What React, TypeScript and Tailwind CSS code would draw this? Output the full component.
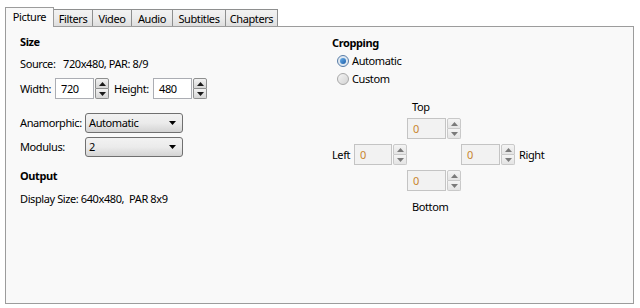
import { ReactNode } from "react";

const tabs = ["Picture", "Filters", "Video", "Audio", "Subtitles", "Chapters"];

const Spinner = ({ disabled }: { disabled?: boolean }) => {
  const btn = disabled
    ? "border-[#c9c9c9] bg-gradient-to-b from-[#f4f4f4] to-[#e4e4e4]"
    : "border-[#8e8f8f] bg-gradient-to-b from-[#f2f2f2] to-[#d6d6d6]";
  const tri = disabled ? "#7a7a7a" : "#1a1a1a";
  return (
    <div className="flex flex-col w-[14px] h-[21px] ml-px">
      <div className={`h-[11px] border rounded-t-[2px] flex items-center justify-center ${btn}`}>
        <svg width="7" height="4" viewBox="0 0 7 4"><path d="M0 4 L3.5 0 L7 4 Z" fill={tri} /></svg>
      </div>
      <div className={`h-[10px] border border-t-0 rounded-b-[2px] flex items-center justify-center ${btn}`}>
        <svg width="7" height="4" viewBox="0 0 7 4"><path d="M0 0 L3.5 4 L7 0 Z" fill={tri} /></svg>
      </div>
    </div>
  );
};

const NumBox = ({ value, disabled }: { value: string; disabled?: boolean }) => (
  <div className="flex items-center">
    <div
      className={`w-[39px] h-[21px] border flex items-center pl-[5px] ${
        disabled ? "border-[#c4c4c4] bg-[#f2f2f2] text-[#c9852e]" : "border-[#abadb3] bg-white text-black"
      }`}
    >
      {value}
    </div>
    <Spinner disabled={disabled} />
  </div>
);

const Select = ({ value }: { value: string }) => (
  <div className="w-[98px] h-[20px] border border-[#707070] rounded-[3px] bg-gradient-to-b from-[#f2f2f2] via-[#ebebeb] to-[#d4d4d4] flex items-center justify-between pl-[3px] pr-[6px]">
    <span>{value}</span>
    <svg width="7" height="4" viewBox="0 0 7 4"><path d="M0 0 L7 0 L3.5 4 Z" fill="#000" /></svg>
  </div>
);

const Radio = ({ checked, children }: { checked?: boolean; children: ReactNode }) => (
  <div className="flex items-center h-4 pl-[5px]">
    <div
      className={`w-[12px] h-[12px] rounded-full border flex items-center justify-center mr-[3px] ${
        checked ? "border-[#5a7ea8] bg-[#dfe8f1]" : "border-[#a8a8a8] bg-gradient-to-br from-[#f4f4f4] to-[#d4d4d4]"
      }`}
    >
      {checked && <div className="w-[6px] h-[6px] rounded-full bg-gradient-to-br from-[#6bb1ec] to-[#1b5ea8]" />}
    </div>
    <span>{children}</span>
  </div>
);

export default function App() {
  return (
    <div
      className="w-[640px] h-[308px] bg-white text-[11px] leading-4 tracking-[-0.4px] text-black pt-[7px] px-[5px]"
      style={{ fontFamily: '"Noto Sans", "Open Sans", sans-serif' }}
    >
      {/* tab strip */}
      <div className="flex items-end h-[20px]">
        {tabs.map((t, i) =>
          i === 0 ? (
            <div
              key={t}
              className="relative z-20 h-[20px] w-[49px] border border-b-0 border-[#9c9c9c] bg-[#f9f9f9] flex items-center justify-center pb-px"
            >
              {t}
            </div>
          ) : (
            <div
              key={t}
              className="relative z-0 h-[18px] border border-l-0 border-b-0 border-[#8e8f8f] bg-gradient-to-b from-[#f2f2f2] via-[#ebebeb] to-[#dcdcdc] flex items-center justify-center"
              style={{ width: [0, 39, 39, 41, 53, 52][i] }}
            >
              {t}
            </div>
          )
        )}
      </div>

      {/* panel */}
      <div className="relative z-10 -mt-px w-[629px] h-[278px] border border-[#9c9c9c] bg-[#f9f9f9] flex">
        {/* left column */}
        <div className="w-[325px] pl-[14px] pt-[7px] flex flex-col">
          <div className="font-bold h-4">Size</div>
          <div className="mt-[6px] h-4 flex">
            <span className="w-[43px]">Source:</span>
            <span>720x480, PAR: 8/9</span>
          </div>
          <div className="mt-[6px] flex items-center h-[21px]">
            <span className="w-[35px]">Width:</span>
            <NumBox value="720" />
            <span className="ml-[5px] w-[39px]">Height:</span>
            <NumBox value="480" />
          </div>
          <div className="mt-[14px] flex items-center">
            <span className="w-[65px]">Anamorphic:</span>
            <Select value="Automatic" />
          </div>
          <div className="mt-[4px] flex items-center">
            <span className="w-[65px]">Modulus:</span>
            <Select value="2" />
          </div>
          <div className="mt-[11px] font-bold h-4">Output</div>
          <div className="mt-[7px] h-4">Display Size: 640x480,&nbsp; PAR 8x9</div>
        </div>

        {/* right column */}
        <div className="pl-px pt-[8px] flex flex-col">
          <div className="font-bold h-4">Cropping</div>
          <div className="mt-[2px]">
            <Radio checked>Automatic</Radio>
          </div>
          <div className="mt-[2px]">
            <Radio>Custom</Radio>
          </div>
          <div className="mt-[12px] grid grid-cols-[22px_53px_54px_54px_auto] grid-rows-[14px_21px_21px_21px_16px] gap-y-[5px]">
            <div />
            <div />
            <div className="pl-[5px] h-4">Top</div>
            <div />
            <div />

            <div />
            <div />
            <NumBox value="0" disabled />
            <div />
            <div />

            <div className="flex items-center">Left</div>
            <NumBox value="0" disabled />
            <div />
            <NumBox value="0" disabled />
            <div className="flex items-center pl-[4px]">Right</div>

            <div />
            <div />
            <NumBox value="0" disabled />
            <div />
            <div />

            <div />
            <div />
            <div className="pl-[5px] mt-[3px]">Bottom</div>
            <div />
            <div />
          </div>
        </div>
      </div>
    </div>
  );
}
